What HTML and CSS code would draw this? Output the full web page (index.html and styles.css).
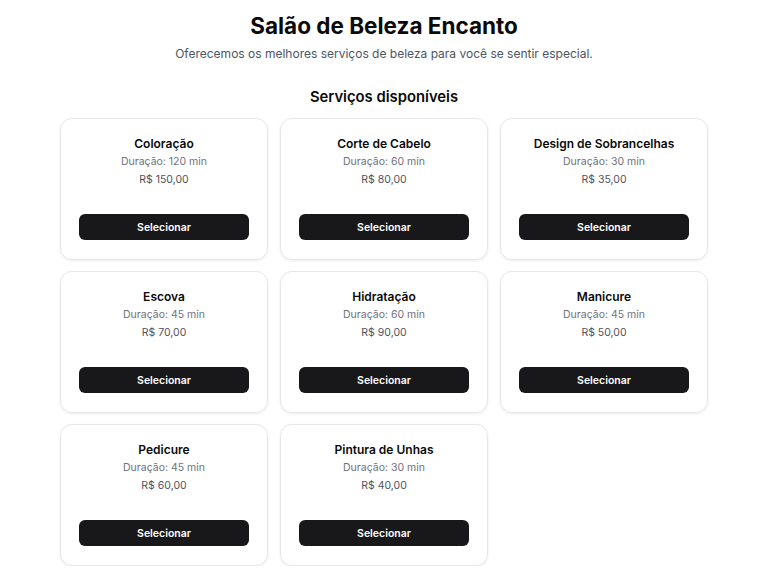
FILE: index.html
```html
<!DOCTYPE html>
<html lang="pt-BR">
<head>
<meta charset="utf-8">
<title>Salão de Beleza Encanto</title>
<link rel="stylesheet" href="styles.css">
</head>
<body>
<main class="page">
  <header class="hero">
    <h1 class="title">Salão de Beleza Encanto</h1>
    <p class="subtitle">Oferecemos os melhores serviços de beleza para você se sentir especial.</p>
  </header>
  <section class="services">
    <h2 class="section-title">Serviços disponíveis</h2>
    <div class="grid">
      <div class="card"><h3 class="card-title">Coloração</h3><p class="duration">Duração: 120 min</p><p class="price">R$ 150,00</p><button class="btn">Selecionar</button></div>
      <div class="card"><h3 class="card-title">Corte de Cabelo</h3><p class="duration">Duração: 60 min</p><p class="price">R$ 80,00</p><button class="btn">Selecionar</button></div>
      <div class="card"><h3 class="card-title">Design de Sobrancelhas</h3><p class="duration">Duração: 30 min</p><p class="price">R$ 35,00</p><button class="btn">Selecionar</button></div>
      <div class="card"><h3 class="card-title">Escova</h3><p class="duration">Duração: 45 min</p><p class="price">R$ 70,00</p><button class="btn">Selecionar</button></div>
      <div class="card"><h3 class="card-title">Hidratação</h3><p class="duration">Duração: 60 min</p><p class="price">R$ 90,00</p><button class="btn">Selecionar</button></div>
      <div class="card"><h3 class="card-title">Manicure</h3><p class="duration">Duração: 45 min</p><p class="price">R$ 50,00</p><button class="btn">Selecionar</button></div>
      <div class="card"><h3 class="card-title">Pedicure</h3><p class="duration">Duração: 45 min</p><p class="price">R$ 60,00</p><button class="btn">Selecionar</button></div>
      <div class="card"><h3 class="card-title">Pintura de Unhas</h3><p class="duration">Duração: 30 min</p><p class="price">R$ 40,00</p><button class="btn">Selecionar</button></div>
    </div>
  </section>
</main>
</body>
</html>
```

FILE: styles.css
```css
* { box-sizing: border-box; }
html, body { margin: 0; padding: 0; background: #ffffff; }
body {
  font-family: Inter, "Noto Sans", "Liberation Sans", sans-serif;
  color: #0a0a0a;
}
.page {
  max-width: 648px;
  margin: 0 auto;
  padding-top: 12px;
}
.hero { text-align: center; }
.title {
  margin: 0;
  font-size: 22.5px;
  line-height: 28px;
  font-weight: 700;
}
.subtitle {
  margin: 5px 0 0;
  font-size: 12px;
  line-height: 18px;
  color: #4b5563;
}
.section-title {
  margin: 22px 0 0;
  text-align: center;
  font-size: 14.8px;
  line-height: 24px;
  font-weight: 600;
}
.grid {
  margin-top: 9px;
  display: grid;
  grid-template-columns: repeat(3, 1fr);
  gap: 11px 12px;
}
.card {
  border: 1px solid #e5e7eb;
  border-radius: 12px;
  box-shadow: 0 1px 3px rgba(0,0,0,0.08);
  padding: 16px 18px 19px;
  display: flex;
  flex-direction: column;
  align-items: center;
  text-align: center;
  height: 142px;
}
.card-title {
  margin: 0;
  font-size: 12px;
  line-height: 18px;
  font-weight: 600;
}
.duration {
  margin: 0;
  font-size: 10.5px;
  line-height: 18px;
  color: #71717a;
}
.price {
  margin: 0;
  font-size: 10.5px;
  line-height: 18px;
  color: #52525b;
  font-weight: 400;
}
.btn {
  margin-top: auto;
  width: 100%;
  height: 26px;
  flex-shrink: 0;
  border: 0;
  border-radius: 6px;
  background: #18181b;
  color: #ffffff;
  font-family: inherit;
  font-size: 10.5px;
  font-weight: 600;
}
```
